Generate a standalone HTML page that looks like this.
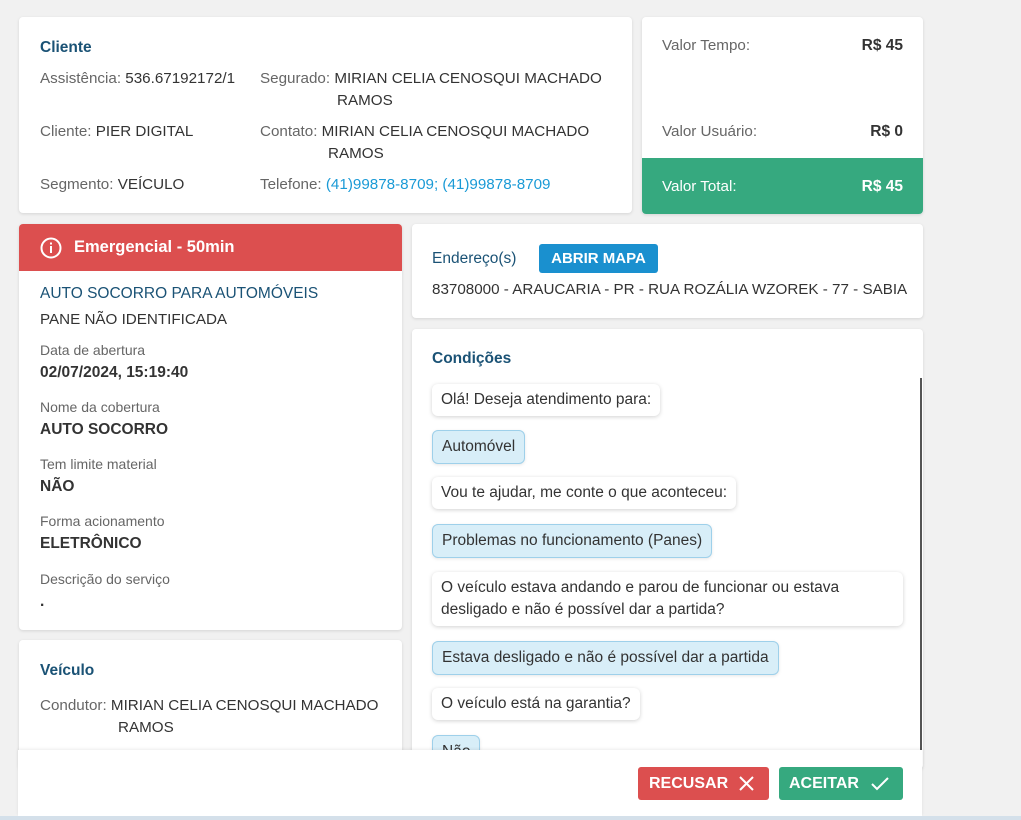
<!DOCTYPE html>
<html><head><meta charset="utf-8"><style>
*{box-sizing:border-box;margin:0;padding:0}
body{width:1021px;height:820px;background:#f1f1f1;font-family:"Liberation Sans",sans-serif;font-size:15.2px;color:#333;position:relative;overflow:hidden}
.card{position:absolute;background:#fff;border-radius:4px;box-shadow:0 1px 3px rgba(0,0,0,.12)}
.t{position:absolute;white-space:nowrap}
.h{color:#1a5275;font-weight:bold;font-size:15.5px}
.l{color:#666}
.blue{color:#1a9ad6}
.bub{position:absolute;left:20px;background:#fff;border-radius:6px;box-shadow:0 1px 4px rgba(0,0,0,.18);padding:5px 9px;line-height:22px;font-size:15.5px;color:#333;white-space:nowrap}
.bub.a{background:#d8eef8;border:1px solid #9ed0ea;box-shadow:0 1px 3px rgba(0,0,0,.1)}
.sm{font-size:14px;color:#666}
.b{font-weight:bold;font-size:15.5px}
</style></head><body>
<div class="card" style="left:19px;top:17px;width:613px;height:196px">
<div class="t h" style="left:21px;top:22px">Cliente</div>
<div class="t" style="left:21px;top:53px"><span class="l">Assistência:</span> 536.67192172/1</div>
<div class="t" style="left:241px;top:53px"><span class="l">Segurado:</span> MIRIAN CELIA CENOSQUI MACHADO</div>
<div class="t" style="left:318px;top:75px">RAMOS</div>
<div class="t" style="left:21px;top:106px"><span class="l">Cliente:</span> PIER DIGITAL</div>
<div class="t" style="left:241px;top:106px"><span class="l">Contato:</span> MIRIAN CELIA CENOSQUI MACHADO</div>
<div class="t" style="left:309px;top:128px">RAMOS</div>
<div class="t" style="left:21px;top:159px"><span class="l">Segmento:</span> VEÍCULO</div>
<div class="t" style="left:241px;top:159px"><span class="l">Telefone:</span> <span class="blue">(41)99878-8709; (41)99878-8709</span></div>
</div>
<div class="card" style="left:642px;top:17px;width:281px;height:197px;overflow:hidden">
<div class="t l" style="left:20px;top:20px">Valor Tempo:</div>
<div class="t b" style="right:20px;top:20px">R$ 45</div>
<div class="t l" style="left:20px;top:106px">Valor Usuário:</div>
<div class="t b" style="right:20px;top:106px">R$ 0</div>
<div style="position:absolute;left:0;top:141px;width:100%;height:56px;background:#36a97f"></div>
<div class="t" style="left:20px;top:161px;color:#fff">Valor Total:</div>
<div class="t b" style="right:20px;top:161px;color:#fff">R$ 45</div>
</div>
<div class="card" style="left:19px;top:224px;width:383px;height:406px;overflow:hidden">
<div style="height:47px;background:#dc4f4f;position:relative">
<svg style="position:absolute;left:21px;top:13px" width="22" height="22" viewBox="0 0 22 22"><circle cx="11" cy="11" r="9.5" fill="none" stroke="#fff" stroke-width="2"/><rect x="10" y="9" width="2" height="7" fill="#fff"/><rect x="10" y="5.5" width="2" height="2" fill="#fff"/></svg>
<div class="t" style="left:55px;top:14px;color:#fff;font-weight:bold;font-size:16.5px">Emergencial - 50min</div></div>
<div class="t h" style="left:21px;top:61px;font-weight:normal;font-size:15.5px">AUTO SOCORRO PARA AUTOMÓVEIS</div>
<div class="t" style="left:21px;top:87px">PANE NÃO IDENTIFICADA</div>
<div class="t sm" style="left:21px;top:118px">Data de abertura</div>
<div class="t b" style="left:21px;top:140px">02/07/2024, 15:19:40</div>
<div class="t sm" style="left:21px;top:175px">Nome da cobertura</div>
<div class="t b" style="left:21px;top:197px">AUTO SOCORRO</div>
<div class="t sm" style="left:21px;top:232px">Tem limite material</div>
<div class="t b" style="left:21px;top:254px">NÃO</div>
<div class="t sm" style="left:21px;top:289px">Forma acionamento</div>
<div class="t b" style="left:21px;top:311px">ELETRÔNICO</div>
<div class="t sm" style="left:21px;top:347px">Descrição do serviço</div>
<div class="t b" style="left:21px;top:369px">.</div>
</div>
<div class="card" style="left:19px;top:640px;width:383px;height:130px">
<div class="t h" style="left:21px;top:22px">Veículo</div>
<div class="t" style="left:21px;top:57px"><span class="l">Condutor:</span> MIRIAN CELIA CENOSQUI MACHADO</div>
<div class="t" style="left:99px;top:79px">RAMOS</div>
</div>
<div class="card" style="left:412px;top:224px;width:511px;height:94px">
<div class="t h" style="left:20px;top:26px;font-weight:normal;color:#1a5275">Endereço(s)</div>
<div style="position:absolute;left:127px;top:20px;width:119px;height:29px;background:#1a90cf;border-radius:3px;color:#fff;font-weight:bold;font-size:15px;text-align:center;line-height:29px">ABRIR MAPA</div>
<div class="t" style="left:20px;top:57px">83708000 - ARAUCARIA - PR - RUA ROZÁLIA WZOREK - 77 - SABIA</div>
</div>
<div class="card" style="left:412px;top:329px;width:511px;height:440px;overflow:hidden">
<div class="t h" style="left:20px;top:21px">Condições</div>
<div style="position:absolute;right:1px;top:49px;width:2px;height:380px;background:#555"></div>
<div class="bub" style="top:55px">Olá! Deseja atendimento para:</div>
<div class="bub a" style="top:101px">Automóvel</div>
<div class="bub" style="top:148px">Vou te ajudar, me conte o que aconteceu:</div>
<div class="bub a" style="top:195px">Problemas no funcionamento (Panes)</div>
<div class="bub" style="top:243px;white-space:normal;width:471px">O veículo estava andando e parou de funcionar ou estava desligado e não é possível dar a partida?</div>
<div class="bub a" style="top:312px">Estava desligado e não é possível dar a partida</div>
<div class="bub" style="top:359px">O veículo está na garantia?</div>
<div class="bub a" style="top:406px">Não</div>
</div>
<div style="position:absolute;left:18px;top:750px;width:904px;height:66px;background:#fff;box-shadow:0 -1px 3px rgba(0,0,0,.08)">
<div style="position:absolute;left:620px;top:17px;width:131px;height:33px;background:#dc4f4f;border-radius:3px;color:#fff;font-weight:bold;font-size:16px;line-height:33px;padding-left:11px">RECUSAR
<svg style="position:absolute;right:14px;top:8px" width="17" height="17" viewBox="0 0 17 17"><path d="M2 2L15 15M15 2L2 15" stroke="#fff" stroke-width="2"/></svg></div>
<div style="position:absolute;left:761px;top:17px;width:124px;height:33px;background:#36a97f;border-radius:3px;color:#fff;font-weight:bold;font-size:16px;line-height:33px;padding-left:10px">ACEITAR
<svg style="position:absolute;right:13px;top:8px" width="20" height="17" viewBox="0 0 20 17"><path d="M2 9L7 14L18 3" fill="none" stroke="#fff" stroke-width="2"/></svg></div>
</div>
<div style="position:absolute;left:0;top:816px;width:1021px;height:4px;background:#d4e0ea"></div>
</body></html>
